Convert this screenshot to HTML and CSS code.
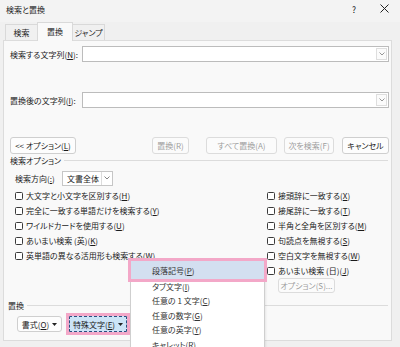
FILE: index.html
```html
<!DOCTYPE html>
<html lang="ja">
<head>
<meta charset="utf-8">
<title>検索と置換</title>
<link rel="stylesheet" href="styles.css">
</head>
<body>
<div class="window">
  <div class="titlebar">
    <span class="title">検索と置換</span>
    <span class="help">?</span>
    <span class="close"><svg width="9" height="9" viewBox="0 0 9 9"><path d="M0.5 0.5 L8.5 8.5 M8.5 0.5 L0.5 8.5" stroke="#222" stroke-width="1" fill="none"/></svg></span>
  </div>
  <div class="tabs">
    <div class="tab t1">検索</div>
    <div class="tab t2 active">置換</div>
    <div class="tab t3">ジャンプ</div>
  </div>
  <div class="panel">
    <div class="field-row">
      <span class="field-label">検索する文字列(<u>N</u>):</span>
      <div class="combo"><span class="combo-arrow"><svg width="6" height="4" viewBox="0 0 6 4"><path d="M0.5 0.5 L3 3 L5.5 0.5" stroke="#8a8a8a" fill="none" stroke-width="0.9"/></svg></span></div>
    </div>
    <div class="field-row replace-row">
      <span class="field-label">置換後の文字列(<u>I</u>):</span>
      <div class="combo"><span class="combo-arrow"><svg width="6" height="4" viewBox="0 0 6 4"><path d="M0.5 0.5 L3 3 L5.5 0.5" stroke="#8a8a8a" fill="none" stroke-width="0.9"/></svg></span></div>
    </div>
    <div class="button-row">
      <button class="btn b-opt">&lt;&lt; オプション(<u>L</u>)</button>
      <button class="btn disabled b-rep">置換(R)</button>
      <button class="btn disabled b-all">すべて置換(A)</button>
      <button class="btn disabled b-next">次を検索(F)</button>
      <button class="btn b-cancel">キャンセル</button>
    </div>
    <div class="group-label"><span>検索オプション</span><i class="rule"></i></div>
    <div class="direction-row">
      <span class="dir-label">検索方向(<u>:</u>)</span>
      <div class="select"><span class="select-text">文書全体</span><span class="select-arrow"><svg width="6" height="4" viewBox="0 0 6 4"><path d="M0.5 0.5 L3 3 L5.5 0.5" stroke="#777" fill="none" stroke-width="0.9"/></svg></span></div>
    </div>
    <div class="options">
      <div class="col">
        <div class="check"><span class="cb"></span><span>大文字と小文字を区別する(<u>H</u>)</span></div>
        <div class="check"><span class="cb"></span><span>完全に一致する単語だけを検索する(<u>Y</u>)</span></div>
        <div class="check"><span class="cb"></span><span>ワイルドカードを使用する(<u>U</u>)</span></div>
        <div class="check"><span class="cb"></span><span>あいまい検索 (英)(<u>K</u>)</span></div>
        <div class="check"><span class="cb"></span><span>英単語の異なる活用形も検索する(<u>W</u>)</span></div>
      </div>
      <div class="col">
        <div class="check"><span class="cb"></span><span>接頭辞に一致する(<u>X</u>)</span></div>
        <div class="check"><span class="cb"></span><span>接尾辞に一致する(<u>T</u>)</span></div>
        <div class="check"><span class="cb"></span><span>半角と全角を区別する(<u>M</u>)</span></div>
        <div class="check"><span class="cb"></span><span>句読点を無視する(<u>S</u>)</span></div>
        <div class="check"><span class="cb"></span><span>空白文字を無視する(<u>W</u>)</span></div>
        <div class="check"><span class="cb"></span><span>あいまい検索 (日)(<u>J</u>)</span></div>
        <button class="btn disabled b-sub">オプション(S)...</button>
      </div>
    </div>
    <div class="group-label replace-group"><span>置換</span><i class="rule"></i></div>
    <div class="bottom-row">
      <button class="btn b-format">書式(<u>O</u>)<svg class="tri" width="5" height="3" viewBox="0 0 5 3"><path d="M0 0 H5 L2.5 3 Z" fill="#222"/></svg></button>
      <div class="pink-ring">
        <button class="btn focused">特殊文字(<u>E</u>)<svg class="tri" width="5" height="3" viewBox="0 0 5 3"><path d="M0 0 H5 L2.5 3 Z" fill="#222"/></svg></button>
      </div>
    </div>
    <div class="menu">
      <div class="menu-item hl">段落記号(<u>P</u>)</div>
      <div class="menu-item">タブ文字(<u>I</u>)</div>
      <div class="menu-item">任意の 1 文字(<u>C</u>)</div>
      <div class="menu-item">任意の数字(<u>G</u>)</div>
      <div class="menu-item">任意の英字(<u>Y</u>)</div>
      <div class="menu-item">キャレット(<u>R</u>)</div>
    </div>
  </div>
</div>
</body>
</html>
```

FILE: styles.css
```css
* { box-sizing: border-box; }
html, body { margin: 0; padding: 0; }
body {
  width: 400px;
  height: 347px;
  overflow: hidden;
  background: #f0f0f0;
  font-family: "Noto Sans CJK JP", "Noto Sans", sans-serif;
  font-size: 8px;
  font-feature-settings: "palt";
  color: #1b1b1b;
}
u { text-decoration-thickness: 1px; text-underline-offset: 1px; }

.window { width: 400px; height: 347px; }

.titlebar {
  height: 22px;
  display: flex;
  align-items: center;
  padding-left: 6px;
  background: #f3f3f3;
}
.title { flex: 1; padding-bottom: 4px; }
.help { width: 5px; margin-right: 23px; padding-bottom: 5px; font-size: 8.5px; }
.close { width: 9px; margin-right: 11px; display: flex; margin-bottom: 5px; }

.tabs {
  height: 18px;
  display: flex;
  align-items: flex-end;
  padding-left: 5px;
  background: #f0f0f0;
}
.tab {
  height: 16px;
  display: flex;
  align-items: center;
  justify-content: center;
  border: 1px solid #d9d9d9;
  border-bottom: none;
  background: #f0f0f0;
}
.t1 { width: 32px; border-right: none; }
.t2 { width: 36px; }
.t3 { width: 32px; border-left: none; }
.tab.active {
  height: 19px;
  background: #f9f9f9;
  margin-bottom: -1px;
  position: relative;
  z-index: 2;
  padding-bottom: 2px;
}

.panel {
  position: relative;
  margin-left: 3px;
  width: 389px;
  height: 301px;
  border: 1px solid #dcdcdc;
  background: #f9f9f9;
  padding: 5px 2px 0 6px;
}

.field-row { display: flex; height: 16px; align-items: center; }
.replace-row { margin-top: 30px; }
.field-label { width: 72px; white-space: nowrap; }
.combo {
  flex: 1;
  height: 16px;
  background: #fff;
  border: 1px solid #bcbcbc;
  display: flex;
  justify-content: flex-end;
  align-items: center;
  padding-right: 1px;
}
.combo-arrow {
  width: 11px;
  height: 12px;
  border: 1px solid #dedede;
  background: #fbfbfb;
  display: flex;
  align-items: center;
  justify-content: center;
}

.btn {
  font: inherit;
  font-feature-settings: "palt";
  color: #1b1b1b;
  height: 17px;
  padding: 0;
  border: 1px solid #cfcfcf;
  border-radius: 3px;
  background: #fdfdfd;
  text-align: center;
  white-space: nowrap;
  flex: none;
}
.btn.disabled { color: #9d9d9d; border-color: #dcdcdc; background: #fbfbfb; }
.tri { margin-left: 3px; vertical-align: middle; position: relative; top: -1px; }

.button-row { display: flex; margin-top: 29px; height: 17px; }
.b-opt { width: 66px; }
.b-rep { width: 37px; margin-left: 76px; }
.b-all { width: 71px; margin-left: 17px; }
.b-next { width: 50px; margin-left: 7px; }
.b-cancel { width: 47px; margin-left: 8px; }

.group-label {
  display: flex;
  align-items: center;
  height: 10px;
  margin-top: 1px;
  gap: 3px;
}
.rule { flex: 1; height: 1px; background: #dcdcdc; margin-right: 1px; }

.direction-row {
  display: flex;
  align-items: center;
  height: 16px;
  margin-top: 5px;
  padding-left: 5px;
}
.dir-label { width: 47px; white-space: nowrap; }
.select {
  width: 51px;
  height: 15px;
  border: 1px solid #c6c6c6;
  background: #fff;
  display: flex;
  align-items: center;
}
.select-text { flex: 1; padding-left: 4px; }
.select-arrow {
  width: 11px;
  height: 100%;
  border-left: 1px solid #dcdcdc;
  display: flex;
  align-items: center;
  justify-content: center;
}

.options {
  display: grid;
  grid-template-columns: 252px auto;
  margin-top: 2px;
  padding-left: 5px;
}
.check { height: 15px; display: flex; align-items: center; white-space: nowrap; }
.cb {
  width: 8px;
  height: 8px;
  border: 1px solid #3a3a3a;
  border-radius: 1.5px;
  background: #fff;
  margin-right: 3px;
  flex: none;
}
.b-sub { width: 57px; height: 15px; margin-left: 11px; display: block; }

.replace-group { margin-top: 7px; margin-left: -2px; }

.bottom-row { display: flex; align-items: flex-start; margin-top: 3px; }
.b-format { width: 45px; height: 16px; margin-left: 7px; margin-top: 3px; }
.pink-ring {
  margin-left: 4px;
  width: 64px;
  height: 22px;
  border: 3px solid #f3a8c8;
  flex: none;
}
.btn.focused {
  display: block;
  width: 100%;
  height: 100%;
  background: #cce4f7;
  border: 1px dashed #2a4f80;
  border-radius: 1px;
}

.menu {
  position: absolute;
  left: 126px;
  top: 218px;
  width: 135px;
  height: 100px;
  background: #fff;
  border: 1px solid #cfcfcf;
  padding-top: 1px;
  box-shadow: 1px 1px 2px rgba(0,0,0,0.08);
  z-index: 5;
  color: #333;
}
.menu-item {
  height: 14.5px;
  display: flex;
  align-items: center;
  padding-left: 21px;
  white-space: pre;
}
.menu-item.hl {
  height: 18px;
  background: #d3dff0;
  outline: 3px solid #f3a8c8;
}
```
